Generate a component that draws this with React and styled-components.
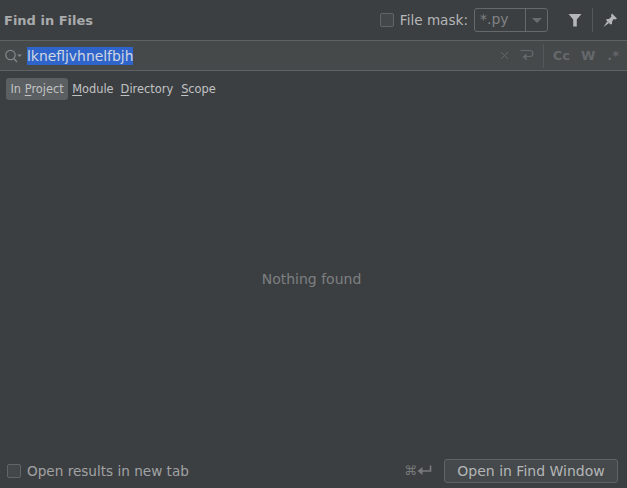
import React from "react";
import styled, { createGlobalStyle } from "styled-components";

const GlobalStyle = createGlobalStyle`
  html, body, #root { margin: 0; padding: 0; height: 100%; }
  body { background: #3c3f41; font-family: "DejaVu Sans", sans-serif; overflow: hidden; }
`;

const Panel = styled.div`
  width: 627px;
  height: 488px;
  display: flex;
  flex-direction: column;
  background: #3c3f41;
  color: #bbbbbb;
`;

const Header = styled.div`
  height: 40px;
  display: flex;
  align-items: center;
  padding: 0 9px 0 4px;
  box-sizing: border-box;
`;

const Title = styled.div`
  font-size: 13px;
  font-weight: bold;
  color: #a9abad;
  flex: 1;
`;

const CheckBox = styled.span`
  width: 14px;
  height: 14px;
  box-sizing: border-box;
  border: 1px solid #626567;
  border-radius: 2px;
  background: #43474a;
  flex: none;
`;

const MaskLabel = styled.span`
  font-size: 13.6px;
  color: #b4b6b8;
  margin: 0 6px;
`;

const MaskBox = styled.div`
  width: 74px;
  height: 24px;
  box-sizing: border-box;
  border: 1px solid #66696b;
  border-radius: 3px;
  display: flex;
  margin-right: 20px;
`;

const MaskValue = styled.span`
  width: 51px;
  border-right: 1px solid #66696b;
  font-size: 14px;
  line-height: 20px;
  color: #808285;
  padding-left: 5px;
  box-sizing: border-box;
`;

const MaskArrow = styled.span`
  flex: 1;
  display: flex;
  align-items: center;
  justify-content: center;
  &::after {
    content: "";
    border-left: 5px solid transparent;
    border-right: 5px solid transparent;
    border-top: 5px solid #6a6d6f;
  }
`;

const IconSlot = styled.span`
  display: flex;
  align-items: center;
  justify-content: center;
  flex: none;
  margin-left: ${(p) => p.$left || 0}px;
`;

const Divider = styled.span`
  width: 1px;
  height: 24px;
  background: #55585a;
  margin: 0 9px 0 ${(p) => p.$gap || 9}px;
  flex: none;
`;

const SearchRow = styled.div`
  height: 31px;
  display: flex;
  align-items: center;
  background: #45494a;
  border-top: 1px solid #5f6163;
  border-bottom: 1px solid #5f6163;
  box-sizing: border-box;
  padding: 0 8px 0 5px;
`;

const Query = styled.span`
  background: #2f65ca;
  color: #d0d6e2;
  font-size: 13.9px;
  line-height: 18px;
  margin-left: 4px;
`;

const Spacer = styled.span`
  flex: 1;
`;

const Option = styled.span`
  font-size: 13px;
  font-weight: bold;
  color: #65686a;
  margin-left: ${(p) => p.$left || 0}px;
`;

const ScopeRow = styled.div`
  display: flex;
  align-items: center;
  padding: 7px 0 0 6px;
`;

const ScopeTab = styled.span`
  font-size: 11.4px;
  line-height: 23px;
  height: 22px;
  padding: 0 ${(p) => (p.$active ? "4.5px" : "0")};
  margin-right: ${(p) => p.$gap}px;
  border-radius: 3px;
  color: #c0c2c4;
  background: ${(p) => (p.$active ? "#5b5f61" : "transparent")};
  u { text-underline-offset: 2px; }
`;

const Empty = styled.div`
  flex: 1;
  display: flex;
  align-items: center;
  justify-content: center;
  font-size: 14px;
  color: #7c7f81;
  padding: 5px 4px 0 0;
`;

const Footer = styled.div`
  height: 35px;
  display: flex;
  align-items: center;
  padding: 0 9px 0 7px;
  box-sizing: border-box;
`;

const FooterLabel = styled.span`
  font-size: 13.6px;
  color: #a0a2a4;
  margin-left: 6px;
  flex: 1;
`;

const Shortcut = styled.span`
  display: flex;
  align-items: center;
  color: #77797b;
  font-size: 13px;
  margin-right: 12px;
  margin-left: -3px;
`;

const Button = styled.button`
  width: 174px;
  height: 24px;
  padding: 0;
  border: 1px solid #606365;
  border-radius: 3px;
  background: #45494b;
  color: #b4b6b8;
  font-family: inherit;
  font-size: 14px;
`;

const SearchIcon = () => (
  <svg width="18" height="14" viewBox="0 0 18 14" fill="none">
    <circle cx="5.5" cy="6" r="4.7" stroke="#85888a" strokeWidth="1.2" />
    <path d="M8.8 9.5L12 13" stroke="#85888a" strokeWidth="1.4" />
    <path d="M12.2 5.5h4.8l-2.4 2.6z" fill="#85888a" />
  </svg>
);

const FilterIcon = () => (
  <svg width="14" height="14" viewBox="0 0 14 14">
    <path d="M0.5 1h13L8.8 6.5V13.5H5.2V6.5z" fill="#b4b6b8" />
  </svg>
);

const PinIcon = () => (
  <svg width="16" height="16" viewBox="0 0 16 16">
    <path d="M10 1.5L15 6.5L13.5 7.5L11.6 7L10 10L10 12L8.5 12.5L4 8L5 7L7 7L9.5 4.5L9 3z" fill="#b4b6b8" />
    <path d="M5.3 9.3L7 11L1.5 15z" fill="#b4b6b8" />
  </svg>
);

const CloseIcon = () => (
  <svg width="9" height="9" viewBox="0 0 9 9">
    <path d="M1 1l7 7M8 1L1 8" stroke="#65686a" strokeWidth="1" fill="none" />
  </svg>
);

const WrapIcon = () => (
  <svg width="14" height="13" viewBox="0 0 14 13" fill="none">
    <path d="M0.5 1.5h9.5a3 3 0 0 1 0 6H5" stroke="#65686a" strokeWidth="1.2" />
    <path d="M6.5 4.5v7L2.5 7.8z" fill="#65686a" />
  </svg>
);

const EnterIcon = () => (
  <svg width="15" height="11" viewBox="0 0 15 11" fill="none">
    <path d="M13.5 0.5V6H4" stroke="#77797b" strokeWidth="1.7" />
    <path d="M5.5 2v8L0.5 6z" fill="#77797b" />
  </svg>
);

const App = () => (
  <Panel>
    <GlobalStyle />
    <Header>
      <Title>Find in Files</Title>
      <CheckBox />
      <MaskLabel>File mask:</MaskLabel>
      <MaskBox>
        <MaskValue>*.py</MaskValue>
        <MaskArrow />
      </MaskBox>
      <IconSlot><FilterIcon /></IconSlot>
      <Divider $gap={10} />
      <IconSlot><PinIcon /></IconSlot>
    </Header>
    <SearchRow>
      <IconSlot><SearchIcon /></IconSlot>
      <Query>lknefljvhnelfbjh</Query>
      <Spacer />
      <IconSlot><CloseIcon /></IconSlot>
      <IconSlot $left={11}><WrapIcon /></IconSlot>
      <Divider $gap={9} />
      <Option>Cc</Option>
      <Option $left={11}>W</Option>
      <Option $left={12}>.*</Option>
    </SearchRow>
    <ScopeRow>
      <ScopeTab $active $gap={4}>In <u>P</u>roject</ScopeTab>
      <ScopeTab $gap={7}><u>M</u>odule</ScopeTab>
      <ScopeTab $gap={8}><u>D</u>irectory</ScopeTab>
      <ScopeTab $gap={0}><u>S</u>cope</ScopeTab>
    </ScopeRow>
    <Empty>Nothing found</Empty>
    <Footer>
      <CheckBox />
      <FooterLabel>Open results in new tab</FooterLabel>
      <Shortcut>⌘<EnterIcon /></Shortcut>
      <Button>Open in Find Window</Button>
    </Footer>
  </Panel>
);

export default App;
